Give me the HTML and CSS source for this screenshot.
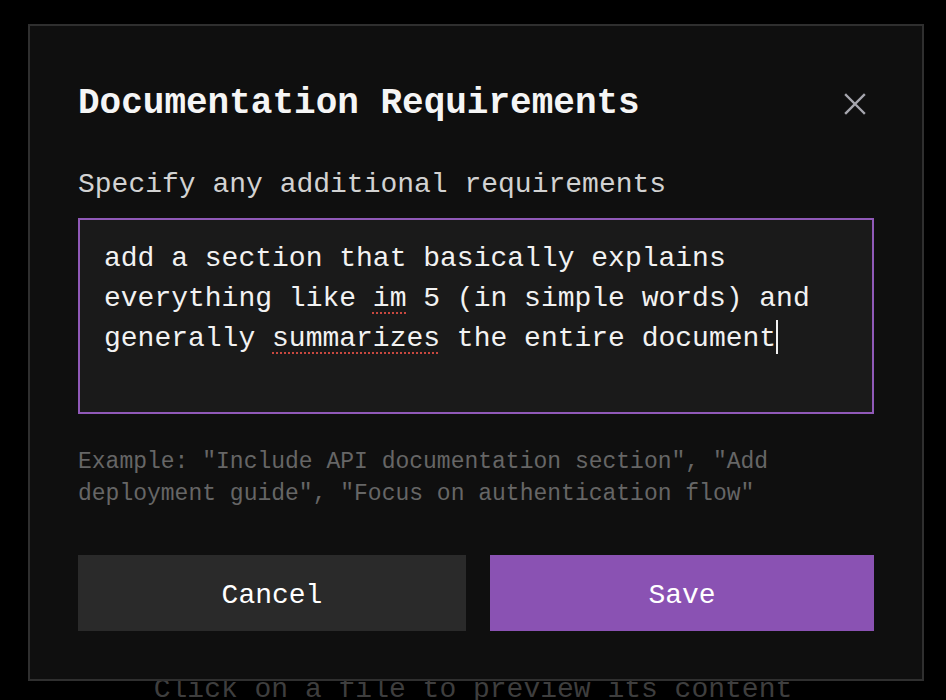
FILE: index.html
```html
<!DOCTYPE html>
<html lang="en">
<head>
<meta charset="utf-8">
<title>Documentation Requirements</title>
<link rel="stylesheet" href="styles.css">
</head>
<body>
<main class="preview">
  <p class="preview-empty">Click on a file to preview its content</p>
</main>

<div class="overlay">
  <section class="modal" role="dialog" aria-labelledby="modal-title">
    <header class="modal-header">
      <h2 id="modal-title" class="modal-title">Documentation Requirements</h2>
      <button class="close-btn" aria-label="Close">
        <svg width="22" height="22" viewBox="0 0 22 22" aria-hidden="true">
          <path d="M2 2 L20 20 M20 2 L2 20" stroke="currentColor" stroke-width="2.4" stroke-linecap="square" fill="none"/>
        </svg>
      </button>
    </header>

    <label class="field-label">Specify any additional requirements</label>
    <div class="textbox">add a section that basically explains everything like <span class="misspelled">im</span> 5 (in simple words) and generally <span class="misspelled">summarizes</span> the entire document<span class="caret"></span></div>

    <p class="hint">Example: "Include API documentation section", "Add deployment guide", "Focus on authentication flow"</p>

    <div class="actions">
      <button class="btn btn-cancel">Cancel</button>
      <button class="btn btn-save">Save</button>
    </div>
  </section>
</div>
</body>
</html>
```

FILE: styles.css
```css
* {
  box-sizing: border-box;
}

html, body {
  margin: 0;
  height: 700px;
  background: #000;
  overflow: hidden;
  font-family: "Liberation Mono", "DejaVu Sans Mono", monospace;
}

.preview {
  height: 700px;
  padding-top: 670px;
}

.preview-empty {
  margin: 0;
  text-align: center;
  font-size: 28px;
  line-height: 40px;
  color: #3e3e3e;
}

.overlay {
  position: fixed;
  inset: 0;
  padding: 24px 0 0 28px;
}

.modal {
  width: 896px;
  background: #0f0f0f;
  border: 2px solid #2f2f2f;
  padding: 50px 48px 48px;
  display: flex;
  flex-direction: column;
}

.modal-header {
  display: flex;
  align-items: center;
  justify-content: space-between;
  height: 56px;
  margin-bottom: 33px;
}

.modal-title {
  margin: 0;
  font-size: 36px;
  line-height: 56px;
  font-weight: 700;
  color: #f5f5f5;
}

.close-btn {
  width: 40px;
  height: 40px;
  margin-right: -1px;
  padding: 0;
  border: none;
  background: transparent;
  color: #a6a6ae;
  display: flex;
  align-items: center;
  justify-content: center;
}

.field-label {
  font-size: 28px;
  line-height: 40px;
  color: #d2d2d2;
  margin-bottom: 13px;
}

.textbox {
  height: 196px;
  background: #1a1a1a;
  border: 2px solid #9059b8;
  padding: 19px 24px 13px;
  font-size: 28px;
  line-height: 40px;
  color: #f2f2f2;
  white-space: pre-wrap;
}

.misspelled {
  text-decoration: underline dotted #c9483f;
  text-decoration-thickness: 2px;
  text-underline-offset: 6px;
}

.caret {
  display: inline-block;
  width: 2px;
  height: 34px;
  background: #f2f2f2;
  vertical-align: -8px;
}

.hint {
  margin: 32px 0 0;
  font-size: 23px;
  line-height: 32px;
  color: #666;
}

.actions {
  display: flex;
  gap: 24px;
  margin-top: 45px;
}

.btn {
  height: 76px;
  padding: 4px 0 0;
  border: none;
  font-family: inherit;
  font-size: 28px;
  color: #fff;
}

.btn-cancel {
  flex: 0 0 388px;
  background: #2a2a2a;
}

.btn-save {
  flex: 1 1 auto;
  background: #8a52b3;
}
```
